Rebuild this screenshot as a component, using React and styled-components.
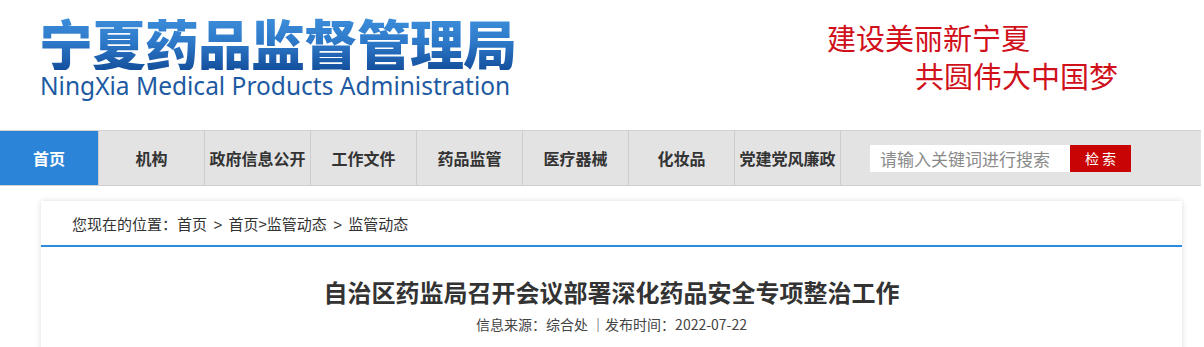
import React from "react";
import styled, { createGlobalStyle } from "styled-components";

const navItems = [
  "首页",
  "机构",
  "政府信息公开",
  "工作文件",
  "药品监管",
  "医疗器械",
  "化妆品",
  "党建党风廉政",
];

const App = () => {
  return (
    <Page>
      <GlobalStyle />
      <Header>
        <Logo>
          <LogoCn>宁夏药品监督管理局</LogoCn>
          <LogoEn>NingXia Medical Products Administration</LogoEn>
        </Logo>
        <Slogan>
          <SloganLine>建设美丽新宁夏</SloganLine>
          <SloganLine indent>共圆伟大中国梦</SloganLine>
        </Slogan>
      </Header>

      <NavBar>
        <NavList>
          {navItems.map((item, i) => (
            <NavItem key={item} active={i === 0} first={i === 0}>
              {item}
            </NavItem>
          ))}
        </NavList>
        <SearchBox>
          <SearchInput placeholder="请输入关键词进行搜索" />
          <SearchButton>检 索</SearchButton>
        </SearchBox>
      </NavBar>

      <Card>
        <Crumbs>
          您现在的位置：首页 <Sep>&gt;</Sep> 首页&gt;监管动态 <Sep>&gt;</Sep> 监管动态
        </Crumbs>
        <Article>
          <Title>自治区药监局召开会议部署深化药品安全专项整治工作</Title>
          <Meta>信息来源：综合处 ｜发布时间：2022-07-22</Meta>
        </Article>
      </Card>
    </Page>
  );
};

const GlobalStyle = createGlobalStyle`
  body {
    margin: 0;
    background: #fff;
    font-family: "Noto Sans CJK SC", "Noto Sans", sans-serif;
  }
`;

const Page = styled.div`
  width: 1204px;
  height: 347px;
  overflow: hidden;
`;

const Header = styled.div`
  height: 130px;
  display: flex;
  box-sizing: border-box;
  padding-left: 39px;
`;

const Logo = styled.div`
  display: flex;
  flex-direction: column;
  padding-top: 16px;
`;

const LogoCn = styled.div`
  font-size: 54px;
  font-weight: 900;
  letter-spacing: -1px;
  line-height: 54px;
  background: linear-gradient(180deg, #3d8fdc 0%, #2d78c8 50%, #134f9c 100%);
  -webkit-background-clip: text;
  background-clip: text;
  color: transparent;
`;

const LogoEn = styled.div`
  font-family: "Noto Sans", "Open Sans", sans-serif;
  font-size: 24.5px;
  line-height: 26px;
  margin-top: 3px;
  color: #1d5aa2;
  padding-left: 1px;
`;

const Slogan = styled.div`
  margin-left: 311px;
  padding-top: 18px;
  display: flex;
  flex-direction: column;
`;

const SloganLine = styled.div`
  font-family: "Noto Sans CJK SC", sans-serif;
  font-size: 29px;
  font-weight: 400;
  line-height: 38px;
  color: #d0101a;
  padding-left: ${(p) => (p.indent ? "88px" : "0")};
`;

const NavBar = styled.div`
  display: flex;
  align-items: center;
  width: 1201px;
  height: 54px;
  background: #e3e3e3;
  border-top: 1px solid #d2d2d2;
  border-bottom: 1px solid #cfcfcf;
`;

const NavList = styled.div`
  display: flex;
  height: 100%;
`;

const NavItem = styled.div`
  width: ${(p) => (p.first ? "98px" : "105px")};
  height: 100%;
  display: flex;
  align-items: center;
  justify-content: center;
  font-size: 16px;
  font-weight: 700;
  color: ${(p) => (p.active ? "#fff" : "#333")};
  background: ${(p) => (p.active ? "#2b84d7" : "transparent")};
  border-right: 1px solid #cdcdcd;
`;

const SearchBox = styled.div`
  display: flex;
  margin-left: 29px;
`;

const SearchInput = styled.input`
  width: 200px;
  height: 27px;
  box-sizing: border-box;
  border: none;
  outline: none;
  padding: 0 8px 0 10px;
  font-family: "Noto Sans CJK SC", sans-serif;
  font-size: 17px;
  color: #333;
  background: #fff;

  &::placeholder {
    color: #8a8a8a;
  }
`;

const SearchButton = styled.button`
  width: 61px;
  height: 27px;
  border: none;
  background: #c80404;
  color: #fff;
  font-family: "Noto Sans CJK SC", sans-serif;
  font-size: 14px;
  padding: 0;
  cursor: pointer;
`;

const Card = styled.div`
  margin: 15px 0 0 41px;
  width: 1141px;
  height: 200px;
  background: #fff;
  box-shadow: 0 0 6px rgba(0, 0, 0, 0.14);
`;

const Crumbs = styled.div`
  height: 46px;
  box-sizing: border-box;
  padding: 13px 0 0 31px;
  font-size: 15px;
  line-height: 20px;
  color: #333;
  border-bottom: 2px solid #2b8be0;
`;

const Sep = styled.span`
  font-family: "Liberation Sans", sans-serif;
  margin: 0 3px;
`;

const Article = styled.div`
  display: flex;
  flex-direction: column;
  align-items: center;
  padding-top: 29px;
`;

const Title = styled.h1`
  margin: 0;
  font-size: 24px;
  line-height: 32px;
  font-weight: 700;
  color: #333;
`;

const Meta = styled.div`
  margin-top: 6px;
  font-size: 14px;
  line-height: 20px;
  color: #444;
`;

export default App;
